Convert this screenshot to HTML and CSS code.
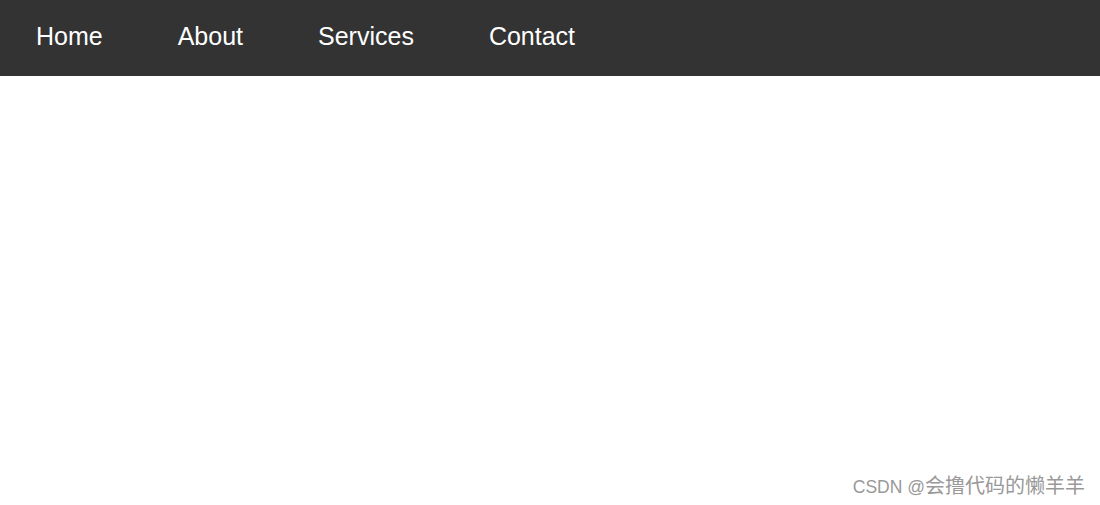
FILE: index.html
```html
<!DOCTYPE html>
<html lang="en">
<head>
    <meta charset="UTF-8">
    <meta name="viewport" content="width=device-width, initial-scale=1.0">
    <title>Navigation</title>
    <link rel="stylesheet" href="styles.css">
</head>
<body>
    <nav class="navbar">
        <ul class="nav-list">
            <li><a href="#">Home</a></li>
            <li><a href="#">About</a></li>
            <li><a href="#">Services</a></li>
            <li><a href="#">Contact</a></li>
        </ul>
    </nav>

    <div class="watermark">CSDN @<span class="cjk">会撸代码的懒羊羊</span></div>
</body>
</html>
```

FILE: styles.css
```css
* {
    margin: 0;
    padding: 0;
    box-sizing: border-box;
}

body {
    font-family: 'Liberation Sans', Arial, sans-serif;
    background: #fff;
    min-height: 100vh;
}

.navbar {
    background: #333;
    height: 76px;
}

.nav-list {
    list-style: none;
    display: flex;
    align-items: center;
    height: 100%;
    padding-bottom: 4px;
}

.nav-list a {
    display: block;
    color: #fff;
    text-decoration: none;
    font-size: 25px;
    padding: 0 37px 0 36px;
}

.nav-list li + li a {
    padding-left: 38px;
}

.watermark {
    position: absolute;
    right: 15px;
    bottom: 6px;
    color: #999;
    font-size: 17.5px;
}

.watermark .cjk {
    font-family: 'Noto Sans CJK SC', sans-serif;
    font-size: 20px;
}
```
